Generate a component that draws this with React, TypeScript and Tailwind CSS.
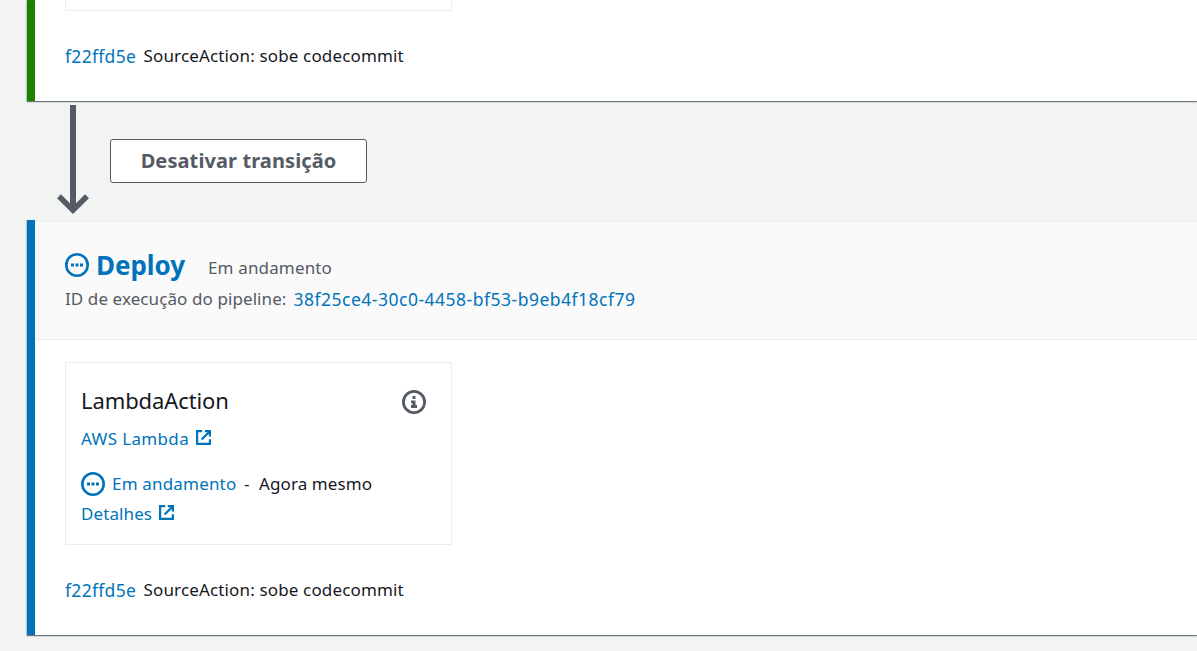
import React from "react";

function ProgressIcon() {
  return (
    <svg className="size-6 shrink-0" viewBox="0 0 24 24" fill="none">
      <circle cx="12" cy="12" r="10.7" stroke="#0073bb" strokeWidth="2.6" />
      <path d="M6 12h3M10.5 12h3M15 12h3" stroke="#0073bb" strokeWidth="3" />
    </svg>
  );
}

function ExternalIcon() {
  return (
    <svg className="mb-[2px] size-4 shrink-0" viewBox="0 0 16 16" fill="none" stroke="#0073bb">
      <path d="M6.2 1.1H1.1v12.8h12.8V9.2" strokeWidth="2.2" />
      <path d="M8.8 1.1h5.1V6.6M13.6 1.4L5.6 9.6" strokeWidth="2.2" />
    </svg>
  );
}

function InfoIcon() {
  return (
    <svg className="size-6 shrink-0" viewBox="0 0 24 24" fill="none">
      <circle cx="12" cy="12" r="10.6" stroke="#545b64" strokeWidth="2.8" />
      <path d="M10.5 6h3v3h-3zM9 10.5h4.5V15H15v3H9v-3h1.5v-1.8H9z" fill="#545b64" />
    </svg>
  );
}

function Revision() {
  return (
    <div className="flex h-[30px] whitespace-pre leading-[30px]">
      <a className="w-[78.5px] text-[17.5px] tracking-[0.3px] text-[#0073bb]">f22ffd5e</a>
      <span className="tracking-[0.15px]">SourceAction: sobe codecommit</span>
    </div>
  );
}

export default function App() {
  return (
    <div className="h-[651px] w-[1197px] overflow-hidden bg-[#f2f3f3] pl-[27px] font-['Noto_Sans',sans-serif] text-[17px] text-[#16191f]">
      <section className="flex h-[101px] flex-col border-l-8 border-[#1d8102] bg-white pl-[30px] shadow-[0_1px_1px_0_rgba(0,28,36,0.4),1px_1px_1px_0_rgba(0,28,36,0.15),-1px_1px_1px_0_rgba(0,28,36,0.15)]">
        <div className="h-[11px] w-[387px] border border-t-0 border-[#eaeded]" />
        <div className="pt-[30px]">
          <Revision />
        </div>
      </section>

      <div className="flex h-[119px] items-start">
        <svg className="mt-1 ml-[30px] h-[110px] w-8 shrink-0" viewBox="0 0 32 110" fill="none">
          <path d="M16 0v105" stroke="#545b64" strokeWidth="6" />
          <path d="M2 91.2l14 14 14-14" stroke="#545b64" strokeWidth="5.5" />
        </svg>
        <button className="mt-[38px] ml-[21px] h-11 w-[257px] rounded-[3px] border border-[#545b64] bg-white text-[20px] leading-[42px] font-bold tracking-[0.1px] text-[#545b64]">
          Desativar transição
        </button>
      </div>

      <section className="h-[415px] border-l-8 border-[#0073bb] bg-white shadow-[0_1px_1px_0_rgba(0,28,36,0.4),1px_1px_1px_0_rgba(0,28,36,0.15),-1px_1px_1px_0_rgba(0,28,36,0.15)]">
        <div className="h-px bg-[#f2f3f3]" />
        <header className="h-[119px] border-y border-[#eaeded] bg-[#fafafa] pl-[30px]">
          <div className="flex h-[62px] items-end">
            <div className="mb-[7px]">
              <ProgressIcon />
            </div>
            <h2 className="mb-px ml-[7px] w-[112px] text-[26px] leading-[36px] font-bold tracking-[-0.05px] text-[#0073bb]">Deploy</h2>
            <span className="mb-px leading-[30px] tracking-[0.15px] text-[#545b64]">Em andamento</span>
          </div>
          <div className="flex leading-[30px] whitespace-nowrap">
            <span className="w-[228.5px] tracking-[0.09px] text-[#545b64]">ID de execução do pipeline:</span>
            <a className="text-[17.5px] tracking-[0.5px] text-[#0073bb]">38f25ce4-30c0-4458-bf53-b9eb4f18cf79</a>
          </div>
        </header>

        <div className="pt-[22px] pl-[30px]">
          <article className="h-[183px] w-[387px] border border-[#eaeded] px-[15px] leading-[30px]">
            <div className="flex h-[61px] items-end justify-between pr-[10px]">
              <h3 className="mb-[2px] text-[22px] leading-[44px] tracking-[-0.1px]">LambdaAction</h3>
              <div className="mb-[10px]">
                <InfoIcon />
              </div>
            </div>
            <div className="flex items-center text-[#0073bb]">
              <a className="mr-[7px] tracking-[0.35px]">AWS Lambda</a>
              <ExternalIcon />
            </div>
            <div className="mt-[15px] flex items-center whitespace-pre">
              <ProgressIcon />
              <a className="ml-[7px] w-[132px] tracking-[0.18px] text-[#0073bb]">Em andamento</a>
              <span className="w-[15px]">-</span>
              <span className="tracking-[0.1px]">Agora mesmo</span>
            </div>
            <div className="flex items-center text-[#0073bb]">
              <a className="mr-[7px] tracking-[0.1px]">Detalhes</a>
              <ExternalIcon />
            </div>
          </article>
          <div className="pt-[30px]">
            <Revision />
          </div>
        </div>
      </section>
    </div>
  );
}
